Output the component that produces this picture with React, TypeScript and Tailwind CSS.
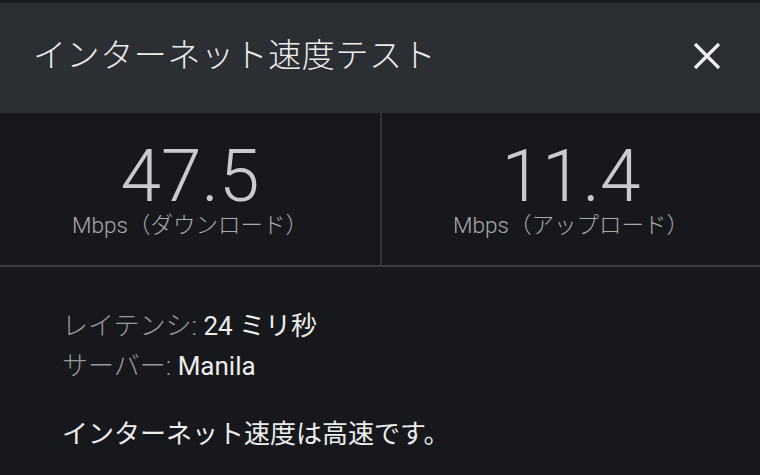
import React from 'react';

const font = { fontFamily: 'Roboto, "Noto Sans CJK JP", sans-serif' };

interface StatProps {
  value: string;
  label: string;
}

function Stat({ value, label }: StatProps) {
  return (
    <div className="flex flex-col items-center pt-[26px]">
      <p className="text-[73px] font-light leading-[74px] text-[#c9cacd]">{value}</p>
      <p className="text-[22.5px] font-light leading-[24px] text-[#a9aaae]">{label}</p>
    </div>
  );
}

export default function App() {
  return (
    <div className="h-[475px] w-[760px] overflow-hidden bg-[#17181c]" style={font}>
      <div className="h-[3px] bg-[#1b1c1f]" />
      <div className="flex h-[110px] items-center justify-between bg-[#2b2e33] pb-[5px] pl-[33px] pr-[38px]">
        <h1 className="text-[33px] font-light tracking-[0.6px] text-[#ebebeb]">インターネット速度テスト</h1>
        <svg width="30" height="30" viewBox="0 0 30 30" className="mt-[1px]">
          <path d="M3 3 L27 27 M27 3 L3 27" stroke="#efefef" strokeWidth="3.2" strokeLinecap="butt" />
        </svg>
      </div>
      <div className="grid h-[154px] grid-cols-[382px_1fr] border-b-2 border-[#3a3b3f]">
        <div className="border-r-2 border-[#34353a]">
          <Stat value="47.5" label="Mbps（ダウンロード）" />
        </div>
        <Stat value="11.4" label="Mbps（アップロード）" />
      </div>
      <div className="px-[62px] pt-[39px] text-[26px] leading-[40px]">
        <p>
          <span className="font-light text-[#98999d]">レイテンシ:</span>
          <span className="text-[#ececec]"> 24 ミリ秒</span>
        </p>
        <p>
          <span className="font-light text-[#98999d]">サーバー:</span>
          <span className="text-[#ececec]"> Manila</span>
        </p>
        <p className="mt-[28px] text-[#ececec]">インターネット速度は高速です。</p>
      </div>
    </div>
  );
}
